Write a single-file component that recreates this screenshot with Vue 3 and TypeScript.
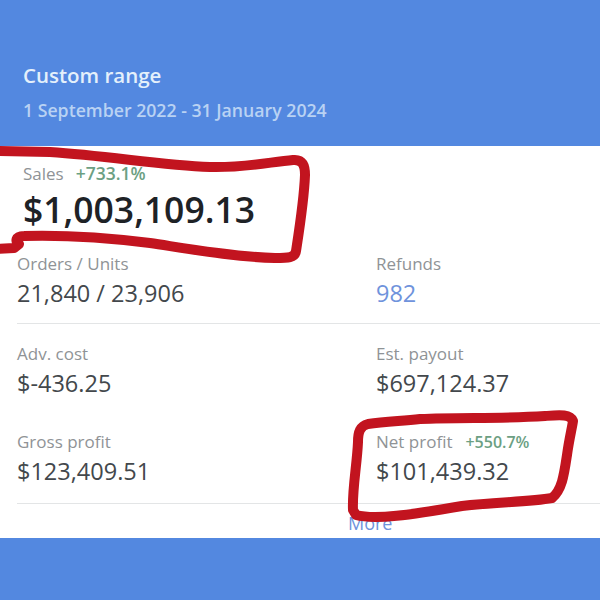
<script setup lang="ts">
interface Stat {
  label: string
  value: string
  change?: string
  link?: boolean
}

const groups: Stat[][] = [
  [
    { label: 'Orders / Units', value: '21,840 / 23,906' },
    { label: 'Refunds', value: '982', link: true },
  ],
  [
    { label: 'Adv. cost', value: '$-436.25' },
    { label: 'Est. payout', value: '$697,124.37' },
    { label: 'Gross profit', value: '$123,409.51' },
    { label: 'Net profit', value: '$101,439.32', change: '+550.7%' },
  ],
]
</script>

<template>
  <div class="page">
    <header class="head">
      <div class="title">Custom range</div>
      <div class="dates">1 September 2022 - 31 January 2024</div>
    </header>

    <main class="card">
      <section class="sales">
        <div class="line">
          <span class="label">Sales</span>
          <span class="change">+733.1%</span>
        </div>
        <div class="total">$1,003,109.13</div>
      </section>

      <section v-for="(group, g) in groups" :key="g" class="group">
        <div v-for="stat in group" :key="stat.label" class="stat">
          <div class="line">
            <span class="label">{{ stat.label }}</span>
            <span v-if="stat.change" class="change small">{{ stat.change }}</span>
          </div>
          <div class="value" :class="{ link: stat.link }">{{ stat.value }}</div>
        </div>
      </section>

      <div class="more">More</div>
    </main>

    <footer class="foot"></footer>

    <svg class="marks" width="600" height="600" viewBox="0 0 600 600" fill="none">
      <path
        d="M-4 151 L50 152 C110 156 160 165 210 167 C245 168 270 162 293 160 C303 159 305 166 305 175 C304 200 300 225 296 251 C295 258 288 258 275 258 C235 257 190 249 150 243 C110 238 60 235 24 236 C15 236 15 242 19 244 L14 248 L-4 249"
        stroke="#c2141f" stroke-width="10" stroke-linejoin="round" stroke-linecap="round"
      />
      <path
        d="M356 515 C375 520 410 515 462 506 C495 502 530 502 552 498 C562 490 564 475 567 455 C569 440 572 428 573 421 C570 414 560 415 545 416 C500 419 460 417 420 419 C400 421 385 422 368 424 C360 426 358 432 358 442 C357 465 352 490 353 510 Z"
        stroke="#c2141f" stroke-width="10" stroke-linejoin="round" stroke-linecap="round"
      />
    </svg>
  </div>
</template>

<style>
html, body { margin: 0; }
</style>

<style scoped>
.page {
  position: relative;
  width: 600px;
  height: 600px;
  overflow: hidden;
  display: flex;
  flex-direction: column;
  background: #fff;
  font-family: "Open Sans", "Noto Sans", sans-serif;
}
.head {
  height: 146px;
  box-sizing: border-box;
  padding: 62px 23px 0;
  background: #5388e0;
}
.title {
  font-size: 20.5px;
  line-height: 27px;
  font-weight: 600;
  color: #e4f0fb;
}
.dates {
  margin-top: 10px;
  font-size: 17.7px;
  line-height: 22px;
  font-weight: 600;
  color: #b9d2f3;
}
.card {
  flex: 1;
  min-height: 0;
  overflow: hidden;
  box-sizing: border-box;
  padding-left: 17px;
}
.sales {
  height: 107px;
  box-sizing: border-box;
  padding: 16px 0 0 6px;
}
.line {
  display: flex;
  align-items: baseline;
  gap: 10px;
  height: 22px;
}
.sales .line {
  gap: 12px;
}
.label {
  font-size: 17px;
  line-height: 22px;
  color: #8f9396;
}
.change {
  font-size: 17.5px;
  line-height: 22px;
  font-weight: 600;
  color: #6c9f83;
}
.change.small {
  font-size: 16px;
  margin-left: 3px;
}
.total {
  margin-top: 4px;
  font-size: 35.5px;
  line-height: 42px;
  font-weight: 600;
  color: #1e2226;
}
.group {
  display: grid;
  grid-template-columns: 359px 1fr;
  row-gap: 33px;
  padding: 19px 0 17px;
  border-bottom: 1px solid #e3e5e6;
}
.sales + .group {
  padding: 0 0 15px;
}
.value {
  margin-top: 3px;
  font-size: 23.5px;
  line-height: 30px;
  color: #43484c;
}
.value.link {
  color: #6f93dc;
}
.more {
  margin-top: 8px;
  padding-left: 331px;
  font-size: 18px;
  line-height: 22px;
  color: #6f93dc;
}
.foot {
  height: 62px;
  flex: none;
  background: #5388e0;
}
.marks {
  position: absolute;
  top: 0;
  left: 0;
}
</style>
